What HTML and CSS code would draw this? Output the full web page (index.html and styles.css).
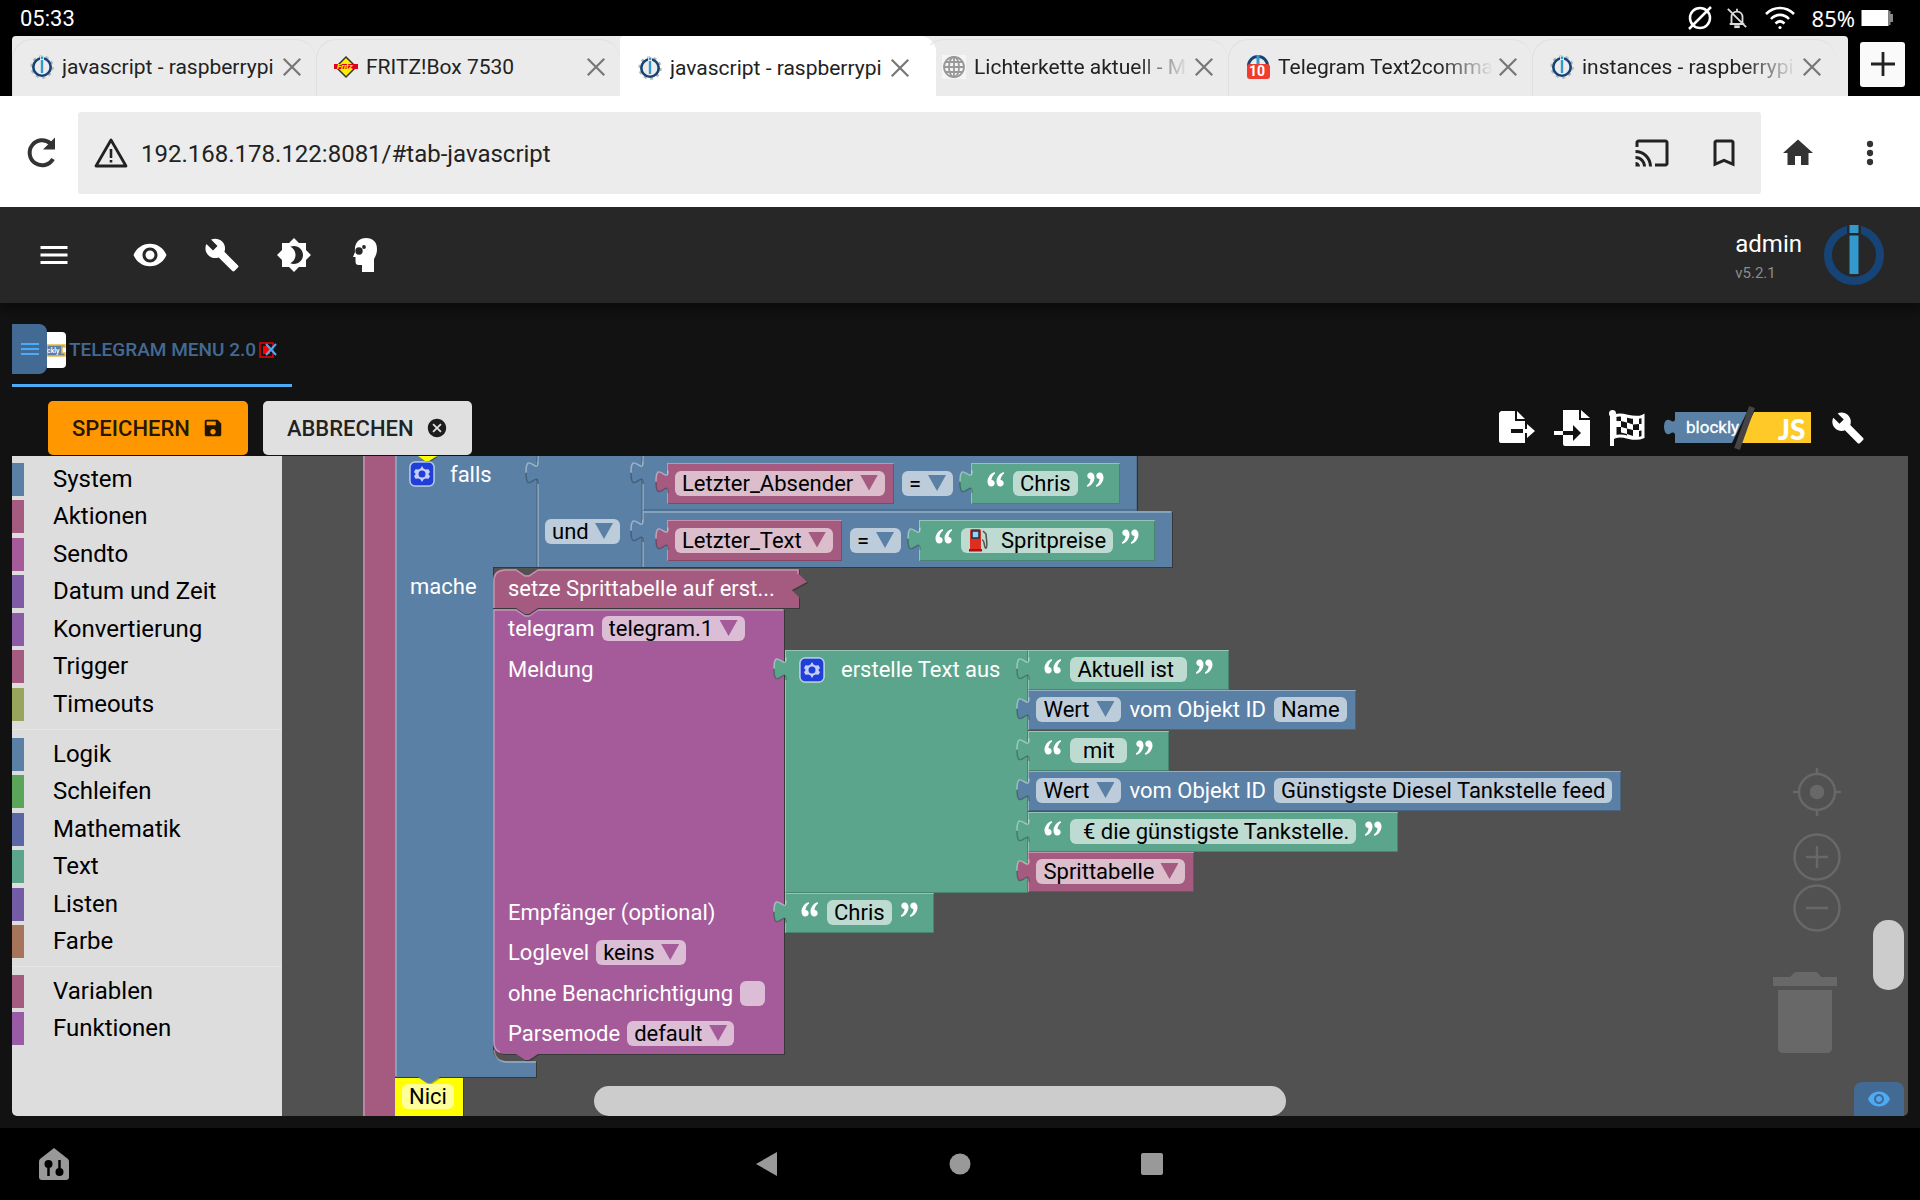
FILE: index.html
```html
<!DOCTYPE html>
<html lang="de">
  <head>
    <meta charset="UTF-8" />
    <meta name="viewport" content="width=device-width, initial-scale=1.0" />
    <title>javascript - raspberrypi</title>
    <link rel="stylesheet" href="styles.css">
  </head>
  <body>
    <!-- shared icons -->
    <svg class="defs" aria-hidden="true">
      <symbol id="iobroker" viewBox="0 0 24 24">
        <circle cx="12" cy="12" r="10.5" fill="none" stroke="#b8b8b8" stroke-width="2.5" stroke-dasharray="3 3.6" />
        <circle cx="12" cy="12" r="8.7" fill="#ececec" stroke="#164477" stroke-width="2.6" />
        <path d="M10 1h4v17h-4z" fill="#ececec" />
        <path d="M10.8 1.5h2.4V4h-2.4zM10.8 5h2.4v13h-2.4z" fill="#3399cc" />
      </symbol>
      <symbol id="close" viewBox="0 0 24 24"><path d="M3 3l18 18M21 3L3 21" fill="none" stroke="currentColor" stroke-width="2.4" /></symbol>
      <symbol id="wrench" viewBox="0 0 24 24"><path d="M22.7 19l-9.1-9.1c.9-2.3.4-5-1.5-6.9-2-2-5-2.4-7.4-1.3L9 6 6 9 1.6 4.7C.4 7.1.9 10.1 2.9 12.1c1.9 1.9 4.6 2.4 6.9 1.5l9.1 9.1c.4.4 1 .4 1.4 0l2.3-2.3c.5-.4.5-1.1.1-1.4z" /></symbol>
      <symbol id="menu" viewBox="0 0 24 24"><path d="M3 18h18v-2H3v2zm0-5h18v-2H3v2zm0-7v2h18V6H3z" /></symbol>
      <symbol id="eye" viewBox="0 0 24 24"><path d="M12 4.5C7 4.5 2.73 7.61 1 12c1.73 4.39 6 7.5 11 7.5s9.27-3.11 11-7.5c-1.73-4.39-6-7.5-11-7.5zM12 17c-2.76 0-5-2.24-5-5s2.24-5 5-5 5 2.24 5 5-2.24 5-5 5zm0-8c-1.66 0-3 1.34-3 3s1.34 3 3 3 3-1.34 3-3-1.34-3-3-3z" /></symbol>
      <symbol id="tab" viewBox="0 0 14 32">
        <path d="M14 8.500H13C13 23.500 1 -3.500 1 19.750C1 43 13 16 13 31h1z" fill="currentColor" />
        <path d="M13 8.500C13 23.500 1 -3.500 1 19.750" fill="none" stroke="#fff" stroke-opacity=".4" stroke-width="1.500" />
        <path d="M1 19.750C1 43 13 16 13 31" fill="none" stroke="#000" stroke-opacity=".25" stroke-width="1.500" />
      </symbol>
      <symbol id="quote" viewBox="0 0 18 15">
        <path d="M7.500 0C3.500 1.500.5 5.500.5 9.500c0 3 1.500 5 3.800 5 2 0 3.400-1.400 3.400-3.300S6.500 8 4.500 8c0-2.500 1.500-5 3.700-6.500zM16.500 0c-4 1.500-7 5.500-7 9.500 0 3 1.500 5 3.800 5 2 0 3.400-1.400 3.400-3.300S15.500 8 13.500 8c0-2.500 1.500-5 3.700-6.500z" fill="#fff" />
      </symbol>
      <symbol id="gear" viewBox="0 0 26 26">
        <rect x="1" y="1" width="24" height="24" rx="5" fill="#1f3fdb" stroke="#fff" stroke-opacity=".65" stroke-width="1.500" />
        <path d="M13 5l1.500 2.500 2 1 3-.2 1.500 2.700-1.700 2 0 0 1.700 2.200-1.500 2.600-3-.2-2 1L13 21l-1.500-2.400-2-1-3 .2L5 15.200 6.700 13 5 11l1.500-2.700 3 .2 2-1z" fill="#fff" fill-opacity=".75" />
        <circle cx="13" cy="13" r="3.500" fill="#1f3fdb" />
      </symbol>
    </svg>

    <div class="statusbar">
      <span class="clock">05:33</span>
      <svg class="i26" viewBox="0 0 26 26" fill="none" stroke="#fff" stroke-width="2.500"><circle cx="13" cy="13" r="10" /><path d="M2 24L24 2" /></svg>
      <svg class="i22" viewBox="0 0 24 24" fill="none" stroke="#ddd" stroke-width="2"><path d="M6 18V11c0-3 2-6 6-6s6 3 6 6v7M4 18.500h16M12 2v3M2 2l20 20" /><path d="M10 21h4v1h-4z" fill="#ddd" /></svg>
      <svg class="i30" viewBox="0 0 30 24" fill="none" stroke="#fff" stroke-width="2.600"><path d="M1 8c8-8 20-8 28 0M6 13c5-5.500 13-5.500 18 0M10.500 17.500c3-3 6-3 9 0" /><circle cx="15" cy="21.500" r="1.600" fill="#fff" stroke="none" /></svg>
      <span class="battery-text">85%</span>
      <svg class="battery" viewBox="0 0 32 16"><path d="M0 0h27v16H0z" fill="#fff" /><path d="M27.500 1H29v3h2.500v8H29v3h-1.500z" fill="#888" /></svg>
    </div>

    <nav class="tabstrip">
      <div class="tabs">
        <div class="tab">
          <svg class="favicon"><use href="#iobroker" /></svg><a href="#">javascript - raspberrypi</a>
          <button class="close" aria-label="Tab schließen"><svg><use href="#close" /></svg></button>
        </div>
        <div class="tab">
          <svg class="favicon" viewBox="0 0 24 24"><path d="M12 2l10 10-10 10L2 12z" fill="#fe0" stroke="#333" stroke-width="1.500" /><path d="M0 9h24v5H0z" fill="#e2001a" /><text x="3" y="14" font-size="8" font-weight="700" font-style="italic" fill="#fe0">Fritz</text></svg><a href="#">FRITZ!Box 7530</a>
          <button class="close" aria-label="Tab schließen"><svg><use href="#close" /></svg></button>
        </div>
        <div class="tab active">
          <svg class="favicon"><use href="#iobroker" /></svg><a href="#">javascript - raspberrypi</a>
          <button class="close" aria-label="Tab schließen"><svg><use href="#close" /></svg></button>
        </div>
        <div class="tab">
          <svg class="favicon" viewBox="0 0 24 24" fill="none" stroke="#999" stroke-width="1.800"><rect width="24" height="24" fill="#f5f5f5" stroke="none" /><circle cx="12" cy="12" r="10" /><ellipse cx="12" cy="12" rx="5" ry="10" /><path d="M12 2v20M2 12h20M4 7h16M4 17h16" /></svg><a href="#" class="fade">Lichterkette aktuell - M</a>
          <button class="close" aria-label="Tab schließen"><svg><use href="#close" /></svg></button>
        </div>
        <div class="tab">
          <svg class="favicon" viewBox="0 0 24 24"><circle cx="12" cy="11" r="9.500" fill="#ececec" stroke="#164477" stroke-width="3" /><path d="M10.500 0h3v11h-3z" fill="#3399cc" /><rect x="1" y="9" width="23" height="15" rx="3" fill="#f03c2e" /><text x="3" y="21" font-size="14" font-weight="700" fill="#fff">10</text></svg><a href="#" class="fade">Telegram Text2comma</a>
          <button class="close" aria-label="Tab schließen"><svg><use href="#close" /></svg></button>
        </div>
        <div class="tab">
          <svg class="favicon"><use href="#iobroker" /></svg><a href="#" class="fade">instances - raspberrypi</a>
          <button class="close" aria-label="Tab schließen"><svg><use href="#close" /></svg></button>
        </div>
      </div>
      <button class="new-tab" aria-label="Neuer Tab"><svg viewBox="0 0 24 24"><path d="M12 0v24M0 12h24" stroke="#222" stroke-width="2.800" /></svg></button>
    </nav>

    <div class="toolbar">
      <button aria-label="Neu laden"><svg class="i36" viewBox="0 0 36 36"><path d="M29 24A12.500 12.500 0 1 1 26.500 8.500" fill="none" stroke="#333" stroke-width="4" /><path d="M31 2.500V14.500H19z" fill="#333" /></svg></button>
      <div class="urlbar">
        <svg class="i34" viewBox="0 0 34 34"><path d="M17 4L32 30H2z" fill="none" stroke="#222" stroke-width="2.800" stroke-linejoin="round" /><path d="M15.700 13h2.600v9h-2.600zM15.700 24h2.600v2.600h-2.600z" fill="#222" /></svg>
        <input type="text" aria-label="Adresse" value="192.168.178.122:8081/#tab-javascript">
        <button aria-label="Streamen"><svg class="i36" viewBox="0 0 24 24" fill="#222"><path d="M21 3H3c-1.100 0-2 .9-2 2v3h2V5h18v14h-7v2h7c1.100 0 2-.9 2-2V5c0-1.100-.9-2-2-2zM1 18v3h3c0-1.660-1.340-3-3-3zm0-4v2c2.760 0 5 2.240 5 5h2c0-3.870-3.130-7-7-7zm0-4v2c4.970 0 9 4.030 9 9h2c0-6.080-4.930-11-11-11z" /></svg></button>
        <button aria-label="Lesezeichen"><svg class="i36" viewBox="0 0 24 24" fill="#222"><path d="M17 3H7c-1.100 0-1.990.9-1.990 2L5 21l7-3 7 3V5c0-1.100-.9-2-2-2zm0 15l-5-2.180L7 18V5h10v13z" /></svg></button>
      </div>
      <button aria-label="Startseite"><svg class="i36" viewBox="0 0 24 24" fill="#333"><path d="M10 20v-6h4v6h5v-8h3L12 3 2 12h3v8z" /></svg></button>
      <button aria-label="Mehr"><svg class="i36" viewBox="0 0 24 24" fill="#333"><circle cx="12" cy="6" r="2.100" /><circle cx="12" cy="12" r="2.100" /><circle cx="12" cy="18" r="2.100" /></svg></button>
    </div>

    <header class="appbar">
      <button class="menu" aria-label="Menü"><svg class="i36"><use href="#menu" /></svg></button>
      <button aria-label="Sichtbarkeit"><svg class="i36"><use href="#eye" /></svg></button>
      <button aria-label="Einstellungen"><svg class="i36"><use href="#wrench" /></svg></button>
      <button aria-label="Design"><svg class="i36" viewBox="0 0 24 24"><path d="M20 8.690V4h-4.690L12 .69 8.690 4H4v4.690L.69 12 4 15.310V20h4.690L12 23.310 15.310 20H20v-4.690L23.310 12 20 8.690zM12 18c-.89 0-1.740-.2-2.500-.55C11.560 16.500 13 14.420 13 12s-1.440-4.500-3.500-5.450C10.260 6.200 11.110 6 12 6c3.310 0 6 2.690 6 6s-2.690 6-6 6z" /></svg></button>
      <button aria-label="Expertenmodus"><svg class="i36" viewBox="0 0 36 36"><path d="M18 1c7 0 11 4 11 11 0 5-1.500 7-3 10v13H14v-7h-3c-2.500 0-3.500-1-3.500-4v-4H5l2-5C6 6 11 1 18 1z" /><circle cx="11" cy="14" r="3.700" fill="#272727" /><circle cx="16" cy="10" r="1.900" fill="#272727" /></svg></button>
      <div class="user">
        <span class="user-name">admin</span>
        <span class="version">v5.2.1</span>
      </div>
      <svg class="logo" viewBox="0 0 60 60"><circle cx="30" cy="30" r="26" fill="none" stroke="#164477" stroke-width="8" /><path d="M23 0h14v10H23z" fill="#272727" /><path d="M25.500 0h9v8h-9zM25.500 10.500h9V49h-9z" fill="#3399cc" /></svg>
    </header>

    <main class="editor">
      <div class="scripts">
        <button class="side-toggle" aria-label="Liste"><svg><use href="#menu" /></svg></button>
        <div class="script-tab">
          <svg class="script-icon" viewBox="0 0 19 36"><path d="M0 0h15a4 4 0 0 1 4 4v28a4 4 0 0 1-4 4H0z" fill="#fff" /><path d="M0 13h18v2h-3v6h3v3H0z" fill="#5b80a5" stroke="#e9b949" stroke-width="1.500" /><text x="0" y="21" font-size="7" fill="#fff">ckly</text></svg>
          <a href="#">TELEGRAM MENU 2.0</a>
          <button aria-label="Skript schließen"><svg class="script-close" viewBox="0 0 18 16"><path d="M1 1h13v14H1z" fill="none" stroke="#e00" stroke-width="1.500" /><path d="M4 4h7v8H4z" fill="#f00" /><path d="M7 2l10 11M17 2L7 13" stroke="#4dabf5" stroke-width="2" /></svg></button>
        </div>
      </div>

      <div class="actions">
        <button class="btn save">SPEICHERN <svg viewBox="0 0 24 24"><path d="M17 3H5c-1.110 0-2 .9-2 2v14c0 1.100.89 2 2 2h14c1.100 0 2-.9 2-2V7l-4-4zm-5 16c-1.660 0-3-1.340-3-3s1.340-3 3-3 3 1.340 3 3-1.340 3-3 3zm3-10H5V5h10v4z" /></svg></button>
        <button class="btn cancel">ABBRECHEN <svg viewBox="0 0 24 24"><path d="M12 2C6.470 2 2 6.470 2 12s4.470 10 10 10 10-4.470 10-10S17.530 2 12 2zm5 13.590L15.590 17 12 13.410 8.410 17 7 15.590 10.590 12 7 8.410 8.410 7 12 10.590 15.590 7 17 8.410 13.410 12 17 15.590z" /></svg></button>
        <div class="tools">
          <button aria-label="Exportieren"><svg class="i36" viewBox="0 0 36 36"><path d="M2 1h14v10h10v22H2a2 2 0 0 1-2-2V3z" /><path d="M18 1l8 8h-8z" /><path d="M12 19h14v4H12z" fill="#121212" /><path d="M24 19h4v-5l8 7-8 7v-5h-4z" /></svg></button>
          <button aria-label="Importieren"><svg class="i36" viewBox="0 0 36 36"><path d="M9 0h16v10h11v26H11a2 2 0 0 1-2-2zM27 0l9 8h-9zM0 21h9v4H0z" /><path d="M9 21h10v-6l8 8-8 8v-6H9z" fill="#121212" /></svg></button>
          <button aria-label="Blöcke prüfen"><svg class="i36" viewBox="0 0 36 36"><path d="M3 2v34" stroke="#fff" stroke-width="4" /><circle cx="3.500" cy="3.500" r="3.500" /><path d="M6 6c8-4 18 5 28 0v21c-10 5-19-4-28 0z" fill="#121212" stroke="#fff" stroke-width="3" /><path d="M12 5l6 1.500v6L12 11zM24 8h6v6l-6 .5zM6 11l6 0v6H6zM18 12.500l6 2v5.500l-6-1.500zM12 17l6 1.500v5.500l-6-1.500zM24 20h6v-6h4v6l-4 1v6h-6zM6 17h0v5h0zM18 24l6 2v2l-6-1z" /></svg></button>
          <button aria-label="Blockly / JavaScript"><svg class="blockly-js" viewBox="0 0 148 46"><path d="M11 7H83L68 38H11V29C8 25 7 30 3 29-1 27-1 16 3 15c4-1 5 4 8 0z" fill="#5b80a5" /><path d="M90 7h57v31H75z" fill="#ffca28" /><path d="M88 2L73 44" stroke="#444" stroke-width="6" /><text x="22" y="28" font-size="17" fill="#fff" stroke="#fff" stroke-width=".3">blockly</text><text x="114" y="35" font-size="28" font-weight="900" font-family="Lato" fill="#fff">JS</text></svg></button>
          <button aria-label="Werkzeuge"><svg class="i34"><use href="#wrench" /></svg></button>
        </div>
      </div>

      <div class="panes">
        <div class="toolbox">
          <ul>
            <li class="c-blue">System</li>
            <li class="c-pink">Aktionen</li>
            <li class="c-purple">Sendto</li>
            <li class="c-date">Datum und Zeit</li>
            <li class="c-convert">Konvertierung</li>
            <li class="c-pink">Trigger</li>
            <li class="c-timeout">Timeouts</li>
          </ul>
          <ul>
            <li class="c-blue">Logik</li>
            <li class="c-loop">Schleifen</li>
            <li class="c-math">Mathematik</li>
            <li class="c-green">Text</li>
            <li class="c-list">Listen</li>
            <li class="c-color">Farbe</li>
          </ul>
          <ul>
            <li class="c-pink">Variablen</li>
            <li class="c-func">Funktionen</li>
          </ul>
        </div>

        <div class="workspace">
          <!-- statement blocks, drawn behind the fields -->
          <svg class="shapes" viewBox="282 456 1626 660">
            <path class="s-pink" d="M363 440H395V1130H363z" />
            <path class="line" d="M364 440V1130" />
            <path class="s-yellow" d="M395 1078h68v50h-68z" />
            <path class="s-blue" d="M395 440H1137V511H1172V567H493V1049q0 12 12 12H536V1077H440l-9 6h-4l-9-6H395z" />
            <path class="line" d="M396 456V1076M538 456V567M643 456V567M643 512H1171M494 1050q1 11 12 12H536" />
            <path class="dark" d="M643 510H1137V456M537 456V567M642 456V567" />
            <path class="s-yellow" d="M418 456h19l-8 5h-4z" />
            <path class="s-purple" d="M493 609h23l9 6h4l9-6H784V1054H538l-9 6h-4l-9-6H505q-12 0-12-12z" />
            <path class="line" d="M783 610H538l-9 6h-4l-9-6H494V1042q0 8 6 10" />
            <path class="s-pink" d="M493 608V581q0-12 12-12h11l9 6h4l9-6H799v5l8 8-15 8 7 7v11H538l-9 6h-4l-9-6z" />
            <path class="line" d="M494 608V581q0-11 12-11h10l9 6h4l9-6H798v4" />
          </svg>

          <div class="if-head"><svg class="i26"><use href="#gear" /></svg><span>falls</span></div>
          <span class="do-label">mache</span>
          <svg class="plug plug-if c-blue"><use href="#tab" /></svg>
          <svg class="plug plug-and1 c-blue"><use href="#tab" /></svg>
          <svg class="plug plug-and2 c-blue"><use href="#tab" /></svg>
          <span class="drop and c-blue"><select aria-label="Verknüpfung"><option>und</option></select></span>

          <div class="compare compare-1">
            <div class="block c-pink"><svg class="plug"><use href="#tab" /></svg><span class="drop"><select aria-label="Variable"><option>Letzter_Absender</option></select></span></div>
            <span class="drop c-blue"><select aria-label="Vergleich"><option>=</option></select></span>
            <div class="block text c-green"><svg class="plug"><use href="#tab" /></svg><svg class="quote"><use href="#quote" /></svg><input aria-label="Text" value="Chris"><svg class="quote end"><use href="#quote" /></svg></div>
          </div>
          <div class="compare compare-2">
            <div class="block c-pink"><svg class="plug"><use href="#tab" /></svg><span class="drop"><select aria-label="Variable"><option>Letzter_Text</option></select></span></div>
            <span class="drop c-blue"><select aria-label="Vergleich"><option>=</option></select></span>
            <div class="block text c-green"><svg class="plug"><use href="#tab" /></svg><svg class="quote"><use href="#quote" /></svg>
              <label class="pump">
                <svg viewBox="0 0 20 24"><path d="M2 22V3q0-2 2-2h7q2 0 2 2v19z" fill="#dd2e20" /><path d="M4 3h7v7H4z" fill="#8fd8f5" stroke="#234" stroke-width="1.500" /><path d="M1 21h13v2.500H1z" fill="#a11" /><path d="M14 12c3 0 2 9 4 8s0-11 0-14l-3-3" fill="none" stroke="#555" stroke-width="1.600" /></svg>
                <input aria-label="Text" value="Spritpreise">
              </label><svg class="quote end"><use href="#quote" /></svg></div>
          </div>

          <span class="collapsed">setze Sprittabelle auf erst...</span>

          <div class="telegram c-purple">
            <label>telegram <span class="drop"><select><option>telegram.1</option></select></span></label>
            <span>Meldung</span>
            <span>Empfänger (optional)</span>
            <label>Loglevel <span class="drop"><select><option>keins</option></select></span></label>
            <label>ohne Benachrichtigung <input type="checkbox"></label>
            <label>Parsemode <span class="drop"><select><option>default</option></select></span></label>
          </div>

          <div class="join">
            <div class="join-head block c-green"><svg class="plug"><use href="#tab" /></svg><svg class="i26"><use href="#gear" /></svg><span>erstelle Text aus</span></div>
            <div class="join-items">
              <div class="block text c-green"><svg class="plug"><use href="#tab" /></svg><svg class="quote"><use href="#quote" /></svg><input aria-label="Text" value="Aktuell ist "><svg class="quote end"><use href="#quote" /></svg></div>
              <div class="block c-blue"><svg class="plug"><use href="#tab" /></svg><span class="drop"><select aria-label="Attribut"><option>Wert</option></select></span><span>vom Objekt ID</span><button class="field">Name</button></div>
              <div class="block text c-green"><svg class="plug"><use href="#tab" /></svg><svg class="quote"><use href="#quote" /></svg><input aria-label="Text" value=" mit "><svg class="quote end"><use href="#quote" /></svg></div>
              <div class="block c-blue"><svg class="plug"><use href="#tab" /></svg><span class="drop"><select aria-label="Attribut"><option>Wert</option></select></span><span>vom Objekt ID</span><button class="field">Günstigste Diesel Tankstelle feed</button></div>
              <div class="block text c-green"><svg class="plug"><use href="#tab" /></svg><svg class="quote"><use href="#quote" /></svg><input aria-label="Text" value=" € die günstigste Tankstelle."><svg class="quote end"><use href="#quote" /></svg></div>
              <div class="block c-pink"><svg class="plug"><use href="#tab" /></svg><span class="drop"><select aria-label="Variable"><option>Sprittabelle</option></select></span></div>
            </div>
          </div>

          <div class="block text receiver c-green"><svg class="plug"><use href="#tab" /></svg><svg class="quote"><use href="#quote" /></svg><input aria-label="Text" value="Chris"><svg class="quote end"><use href="#quote" /></svg></div>

          <button class="field comment">Nici</button>

          <div class="zoom">
            <button aria-label="Zentrieren"><svg viewBox="0 0 48 48"><circle cx="24" cy="24" r="18" /><path d="M24 0v6M24 42v6M0 24h6M42 24h6" /><circle cx="24" cy="24" r="6" fill="#686868" /></svg></button>
            <button aria-label="Vergrößern"><svg viewBox="0 0 48 48"><circle cx="24" cy="24" r="22.500" /><path d="M24 13v22M13 24h22" /></svg></button>
            <button aria-label="Verkleinern"><svg viewBox="0 0 48 48"><circle cx="24" cy="24" r="22.500" /><path d="M13 24h22" /></svg></button>
          </div>
          <svg class="trash" viewBox="0 0 64 82"><path d="M0 5h17l4-4q1-1 3-1h18q2 0 3 1l3 4h16v9H0zM5 18h54v58q0 5-5 5H10q-5 0-5-5z" fill="#686868" /></svg>
          <div class="scroll-v"></div>
          <div class="scroll-h"></div>
          <button class="show-code" aria-label="Code anzeigen"><svg><use href="#eye" /></svg></button>
        </div>
      </div>
    </main>

    <footer class="sysnav">
      <button aria-label="Gerätesteuerung"><svg viewBox="0 0 32 34"><path d="M16 1l14 11q1 1 1 3v15q0 3-3 3H4q-3 0-3-3V15q0-2 1-3z" fill="#999" /><path d="M10.500 18v11M21.500 13v11" stroke="#000" stroke-width="2.500" /><circle cx="10.500" cy="17" r="4" /><circle cx="21.500" cy="25" r="4" /></svg></button>
      <div class="sysnav-keys">
        <button aria-label="Zurück"><svg viewBox="0 0 24 24"><path d="M21 0v24L0 12z" fill="#999" /></svg></button>
        <button aria-label="Start"><svg viewBox="0 0 24 24"><circle cx="12" cy="12" r="10.500" fill="#999" /></svg></button>
        <button aria-label="Übersicht"><svg viewBox="0 0 24 24"><rect x="1" y="1" width="22" height="22" rx="2" fill="#999" /></svg></button>
      </div>
    </footer>
  </body>
</html>
```
FILE: styles.css
```css
* {
  box-sizing: border-box;
}

body {
  margin: 0;
  min-height: 100vh;
  display: flex;
  flex-direction: column;
  background: #121212;
  font-family: Roboto, "Noto Sans", sans-serif;
  font-size: 22px;
}

button,
input,
select {
  font: inherit;
  margin: 0;
  padding: 0;
  border: none;
  background: none;
  color: inherit;
}

button {
  display: flex;
  align-items: center;
  justify-content: center;
  cursor: pointer;
}

a {
  color: inherit;
  text-decoration: none;
}

svg {
  display: block;
  flex: none;
}

.defs {
  position: absolute;
  width: 0;
  height: 0;
}

.i22 { width: 22px; height: 22px; }
.i26 { width: 26px; height: 26px; }
.i30 { width: 30px; height: 24px; }
.i34 { width: 34px; height: 34px; }
.i36 { width: 36px; height: 36px; }

/* android status bar */
.statusbar {
  height: 36px;
  padding: 0 26px 0 20px;
  display: flex;
  align-items: center;
  background: #000;
  color: #fff;
}

.clock {
  margin-right: auto;
}

.statusbar svg {
  margin-right: 17px;
}

.statusbar .i26 {
  margin-right: 13px;
}

.battery-text {
  font-family: "Noto Sans", sans-serif;
  font-size: 22px;
  margin-right: 6px;
}

.statusbar .battery {
  width: 33px;
  height: 16px;
  margin: 0;
}

/* browser tabs */
.tabstrip {
  height: 60px;
  padding: 0 15px 0 12px;
  display: flex;
  align-items: center;
  gap: 12px;
  background: #000;
}

.tabs {
  flex: 1;
  align-self: stretch;
  display: flex;
  padding-right: 12px;
  background: #ebebeb;
  border-radius: 4px 4px 0 0;
}

.tab {
  flex: 1 1 0;
  min-width: 0;
  display: flex;
  align-items: center;
  padding: 0 13px 2px 17px;
  margin-top: 3px;
  border: 1px solid #e0e0e0;
  border-width: 1px 0 0 1px;
  border-radius: 20px 20px 0 0;
  color: #222;
  font-size: 21px;
}

.tab.active {
  flex-basis: 12px;
  margin: 0 -12px 0 0;
  padding: 2px 25px 0 17px;
  background: #fff;
  border-color: #fff;
  border-radius: 4px 16px 0 0;
}

.active + .tab {
  border-left-color: transparent;
}

.favicon {
  width: 24px;
  height: 24px;
  margin-right: 8px;
}

.tab a {
  flex: 1;
  overflow: hidden;
  white-space: nowrap;
}

.tab .fade {
  mask-image: linear-gradient(90deg, #000 75%, transparent);
}

.close {
  color: #777;
  margin-left: 4px;
}

.close svg {
  width: 22px;
  height: 22px;
}

.new-tab {
  width: 45px;
  height: 45px;
  margin-bottom: 4px;
  background: #fafafa;
  border-radius: 3px;
}

.new-tab svg {
  width: 24px;
  height: 24px;
}

/* address bar */
.toolbar {
  height: 111px;
  padding: 16px 32px 13px 24px;
  display: flex;
  align-items: center;
  background: #fff;
  color: #222;
}

.urlbar {
  flex: 1;
  height: 82px;
  margin: 0 19px 0 18px;
  padding: 0 19px 0 16px;
  display: flex;
  align-items: center;
  background: #ececec;
  border-radius: 3px;
}

.urlbar input {
  flex: 1;
  margin-left: 13px;
  padding-top: 2px;
  font-size: 24px;
}

.urlbar button + button,
.toolbar > button + button {
  margin-left: 36px;
}

/* admin header */
.appbar {
  height: 96px;
  padding: 0 36px;
  display: flex;
  align-items: center;
  gap: 36px;
  background: #272727;
  color: #fff;
  fill: #fff;
  box-shadow: 0 8px 8px rgba(0, 0, 0, 0.3);
}

.menu {
  margin-right: 24px;
}

.user {
  margin-left: auto;
  margin-right: -14px;
  padding-top: 3px;
  display: flex;
  flex-direction: column;
  gap: 5px;
}

.user-name {
  font-size: 24px;
  line-height: 28px;
}

.version {
  font-size: 15px;
  line-height: 20px;
  color: #8c8c8c;
}

.logo {
  width: 60px;
  height: 60px;
}

/* script editor */
.editor {
  flex: 1;
  display: flex;
  flex-direction: column;
  padding: 21px 12px 12px;
}

.scripts {
  display: flex;
  align-items: flex-start;
  height: 63px;
}

.side-toggle {
  width: 35px;
  height: 50px;
  background: #436a93;
  border-radius: 0 8px 8px 0;
  fill: #4dabf5;
  position: relative;
}

.side-toggle svg {
  width: 24px;
  height: 24px;
}

.script-tab {
  height: 63px;
  margin-left: -35px;
  padding: 0 15px 9px 35px;
  display: flex;
  align-items: center;
  border-bottom: 3px solid #4dabf5;
  color: #436a93;
  font-size: 19px;
  font-weight: 500;
}

.script-icon {
  width: 19px;
  height: 36px;
  margin-right: 3px;
}

.script-close {
  width: 18px;
  height: 16px;
  margin-left: 3px;
}

.actions {
  display: flex;
  align-items: center;
  height: 69px;
  padding: 13px 43px 0 36px;
  gap: 15px;
}

.btn {
  height: 54px;
  padding: 0 24px;
  gap: 12px;
  border-radius: 5px;
  font-weight: 500;
  font-size: 22px;
  color: rgba(0, 0, 0, 0.87);
  fill: rgba(0, 0, 0, 0.87);
}

.btn svg {
  width: 22px;
  height: 22px;
}

.save {
  background: #ff9800;
}

.cancel {
  background: #e0e0e0;
}

.tools {
  margin-left: auto;
  display: flex;
  align-items: center;
  gap: 19px;
  fill: #fff;
}

.blockly-js {
  width: 148px;
  height: 46px;
}

.panes {
  flex: 1;
  display: flex;
  border-radius: 0 0 5px 5px;
  overflow: hidden;
}

/* block colours */
.c-blue { --block: #5b80a5; }
.c-pink { --block: #a55b80; }
.c-purple { --block: #a55b99; }
.c-date { --block: #805ba5; }
.c-convert { --block: #8c5ba5; }
.c-timeout { --block: #99a55b; }
.c-loop { --block: #5ba55b; }
.c-math { --block: #5b67a5; }
.c-green { --block: #5ba58c; }
.c-list { --block: #745ba5; }
.c-color { --block: #a5745b; }
.c-func { --block: #995ba5; }

.toolbox {
  width: 270px;
  padding-top: 7px;
  background: #ddd;
  color: #000;
  font-size: 24px;
}

.toolbox ul {
  list-style: none;
  margin: 0;
  padding: 0;
}

.toolbox ul + ul {
  margin-top: 8px;
  padding-top: 8px;
  border-top: 1px solid #e5e5e5;
}

.toolbox li {
  height: 33px;
  line-height: 33px;
  border-left: 12px solid var(--block);
  padding-left: 29px;
}

.toolbox li + li {
  margin-top: 4px;
}

.toolbox li:nth-child(odd) {
  margin-top: 5px;
}

.toolbox li:first-child {
  margin-top: 0;
}

/* blockly canvas */
.workspace {
  flex: 1;
  position: relative;
  overflow: hidden;
  background: #515151;
  color: #fff;
  white-space: nowrap;
}

.shapes {
  position: absolute;
  left: 0;
  top: 0;
  width: 1626px;
  height: 660px;
}

.s-pink,
.s-blue,
.s-purple,
.s-yellow {
  filter: drop-shadow(1px 1px 0 rgba(0, 0, 0, 0.3));
}

.s-pink { fill: #a55b80; }
.s-blue { fill: #5b80a5; }
.s-purple { fill: #a55b99; }
.s-yellow { fill: #ff0; }

.line {
  fill: none;
  stroke: #fff;
  stroke-opacity: 0.35;
  stroke-width: 1.5;
}

.dark {
  fill: none;
  stroke: #000;
  stroke-opacity: 0.25;
}

.block {
  position: relative;
  display: flex;
  align-items: center;
  gap: 8px;
  width: max-content;
  height: 40px;
  padding: 0 9px 1px 8px;
  background: var(--block);
  box-shadow: inset 1px 1px rgba(255, 255, 255, 0.35), inset -1px -1px rgba(0, 0, 0, 0.2);
}

.block.text {
  padding: 0 16px 1px;
}

.plug {
  position: absolute;
  left: -12px;
  top: -1px;
  width: 14px;
  height: 32px;
  color: var(--block);
}

.quote {
  width: 18px;
  height: 15px;
  margin-bottom: 7px;
}

.quote.end {
  transform: rotate(180deg);
}

.drop {
  position: relative;
  display: inline-flex;
}

.drop::after {
  content: "";
  position: absolute;
  right: 7px;
  top: 4px;
  width: 18px;
  height: 16px;
  background: var(--block);
  clip-path: polygon(0 0, 100% 0, 50% 100%);
  pointer-events: none;
}

.drop select,
.field,
.block input,
.pump {
  height: 25px;
  line-height: 25px;
  padding: 0 7px;
  border-radius: 6px;
  background: rgba(255, 255, 255, 0.6);
  color: #000;
}

.drop select {
  appearance: none;
  padding-right: 31px;
}

.block input {
  field-sizing: content;
}

.pump {
  display: flex;
  align-items: center;
  gap: 13px;
}

.pump svg {
  width: 20px;
  height: 24px;
}

.block .pump input {
  padding: 0;
  background: none;
}

.if-head,
.do-label,
.and,
.compare,
.collapsed,
.telegram,
.join,
.receiver,
.comment {
  position: absolute;
}

.if-head {
  left: 127px;
  top: 5px;
  display: flex;
  align-items: center;
  gap: 15px;
}

.do-label {
  left: 128px;
  top: 118px;
}

.plug-if { left: 243px; top: -3px; }
.plug-and1 { left: 348px; top: -3px; }
.plug-and2 { left: 348px; top: 55px; }

.and {
  left: 263px;
  top: 63px;
}

.compare {
  left: 385px;
  display: flex;
  align-items: center;
  gap: 8px;
}

.compare .block {
  height: 41px;
}

.compare .text {
  margin-left: 10px;
}

.compare-1 { top: 7px; }
.compare-2 { top: 64px; }

.collapsed {
  left: 226px;
  top: 120px;
}

.telegram {
  left: 226px;
  top: 153px;
  display: grid;
  grid-template-rows: 41px 243px 40px 41px 40px 41px;
  line-height: 39px;
}

.telegram label {
  height: 39px;
  display: flex;
  align-items: center;
  gap: 7px;
}

.telegram input {
  appearance: none;
  width: 25px;
  height: 25px;
  border-radius: 6px;
  background: rgba(255, 255, 255, 0.6);
}

.join {
  left: 503px;
  top: 194px;
  display: flex;
}

.join-head {
  height: auto;
  align-items: flex-start;
  gap: 16px;
  padding: 7px 28px 0 14px;
}

.join-items {
  display: flex;
  flex-direction: column;
}

.join-items .block:nth-child(even) {
  margin-bottom: 1px;
}

.receiver {
  left: 503px;
  top: 437px;
}

.comment {
  left: 120px;
  top: 628px;
}

.zoom {
  position: absolute;
  right: 67px;
  top: 312px;
  display: flex;
  flex-direction: column;
  gap: 3px;
}

.zoom button:first-child {
  margin-bottom: 14px;
}

.zoom svg {
  width: 48px;
  height: 48px;
  fill: none;
  stroke: #686868;
  stroke-width: 2.5;
}

.trash {
  position: absolute;
  right: 71px;
  bottom: 62px;
  width: 64px;
  height: 82px;
}

.scroll-v,
.scroll-h {
  position: absolute;
  background: #ccc;
  border-radius: 15px;
}

.scroll-v {
  right: 4px;
  top: 464px;
  width: 31px;
  height: 70px;
}

.scroll-h {
  left: 312px;
  bottom: 0;
  width: 692px;
  height: 30px;
}

.show-code {
  position: absolute;
  right: 4px;
  bottom: 0;
  width: 50px;
  height: 34px;
  background: #436a93;
  border-radius: 8px 8px 0 0;
  fill: #4dabf5;
}

.show-code svg {
  width: 24px;
  height: 24px;
}

/* android navigation bar */
.sysnav {
  height: 72px;
  padding: 0 38px;
  display: grid;
  grid-template-columns: 1fr auto 1fr;
  align-items: center;
  background: #000;
}

.sysnav > button {
  justify-self: start;
}

.sysnav > button svg {
  width: 32px;
  height: 34px;
}

.sysnav-keys {
  display: flex;
  gap: 168px;
}

.sysnav-keys svg {
  width: 24px;
  height: 24px;
}
```
